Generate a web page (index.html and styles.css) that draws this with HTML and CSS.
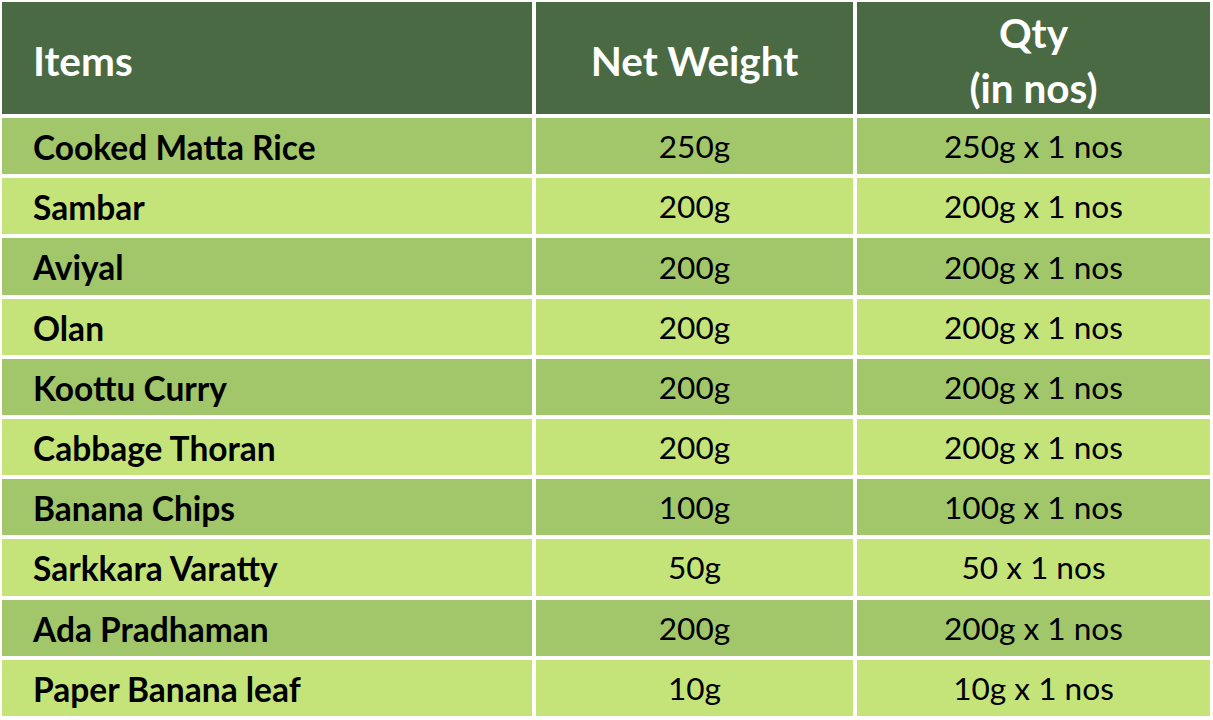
FILE: index.html
```html
<!DOCTYPE html>
<html>
<head>
<meta charset="utf-8">
<link rel="stylesheet" href="styles.css">
</head>
<body>
<div class="table">
  <div class="cell head left">Items</div>
  <div class="cell head center">Net Weight</div>
  <div class="cell head center">Qty<br>(in nos)</div>

  <div class="cell dark left name">Cooked Matta Rice</div>
  <div class="cell dark center">250g</div>
  <div class="cell dark center">250g x 1 nos</div>

  <div class="cell light left name">Sambar</div>
  <div class="cell light center">200g</div>
  <div class="cell light center">200g x 1 nos</div>

  <div class="cell dark left name">Aviyal</div>
  <div class="cell dark center">200g</div>
  <div class="cell dark center">200g x 1 nos</div>

  <div class="cell light left name">Olan</div>
  <div class="cell light center">200g</div>
  <div class="cell light center">200g x 1 nos</div>

  <div class="cell dark left name">Koottu Curry</div>
  <div class="cell dark center">200g</div>
  <div class="cell dark center">200g x 1 nos</div>

  <div class="cell light left name">Cabbage Thoran</div>
  <div class="cell light center">200g</div>
  <div class="cell light center">200g x 1 nos</div>

  <div class="cell dark left name">Banana Chips</div>
  <div class="cell dark center">100g</div>
  <div class="cell dark center">100g x 1 nos</div>

  <div class="cell light left name">Sarkkara Varatty</div>
  <div class="cell light center">50g</div>
  <div class="cell light center">50 x 1 nos</div>

  <div class="cell dark left name">Ada Pradhaman</div>
  <div class="cell dark center">200g</div>
  <div class="cell dark center">200g x 1 nos</div>

  <div class="cell light left name">Paper Banana leaf</div>
  <div class="cell light center">10g</div>
  <div class="cell light center">10g x 1 nos</div>
</div>
</body>
</html>
```
FILE: styles.css
```css
html, body {
  margin: 0;
  padding: 0;
  background: #ffffff;
}
body {
  font-family: Lato, "Liberation Sans", sans-serif;
  color: #000;
}
.table {
  display: grid;
  grid-template-columns: 530px 317px 353px;
  grid-template-rows: 112px repeat(10, 56.2px);
  gap: 4px;
  padding: 2px;
}
.cell {
  display: flex;
  align-items: center;
  font-size: 31.6px;
  line-height: 1.2;
  padding-top: 2px;
  box-sizing: border-box;
}
.head {
  background: #4a6a43;
  color: #fff;
  font-weight: 700;
  font-size: 40.5px;
  line-height: 55px;
  padding-top: 4px;
}
.left {
  padding-left: 31px;
}
.center {
  justify-content: center;
  text-align: center;
}
.name {
  font-weight: 700;
  font-size: 33.5px;
}
.dark {
  background: #a1c76a;
}
.light {
  background: #c4e47a;
}
```
